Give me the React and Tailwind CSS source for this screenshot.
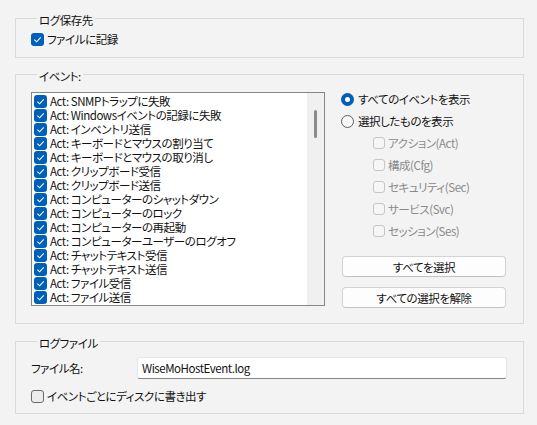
import React from "react";

const events = [
    "SNMPトラップに失敗",
    "Windowsイベントの記録に失敗",
    "インベントリ送信",
    "キーボードとマウスの割り当て",
    "キーボードとマウスの取り消し",
    "クリップボード受信",
    "クリップボード送信",
    "コンピューターのシャットダウン",
    "コンピューターのロック",
    "コンピューターの再起動",
    "コンピューターユーザーのログオフ",
    "チャットテキスト受信",
    "チャットテキスト送信",
    "ファイル受信",
    "ファイル送信",
    "ファイル転送の開始",
];

const categories = [
    ["アクション", "(Act)"],
    ["構成", "(Cfg)"],
    ["セキュリティ", "(Sec)"],
    ["サービス", "(Svc)"],
    ["セッション", "(Ses)"],
];

const Check = () => (
    <svg width="9" height="9" viewBox="0 0 10 10">
        <polyline points="1.5,5.2 4,7.6 8.6,2.6" fill="none" stroke="white" strokeWidth="1.2" />
    </svg>
);

const CheckedBox = () => (
    <span className="w-[13px] h-[13px] shrink-0 rounded-[3px] bg-[#005fb8] flex items-center justify-center">
        <Check />
    </span>
);

// group box with the caption sitting on the top border
const Group = ({ title, className, children }) => (
    <div className={"border border-[#dadada] " + className}>
        <div className="w-fit -mt-[6px] ml-[6px] px-[2px] bg-[#f3f3f3] leading-[14px] h-[14px]">{title}</div>
        {children}
    </div>
);

const App = () => {
    return (
        <div className="w-[537px] h-[425px] bg-[#f3f3f3] pl-[15px] pr-[13px] pt-[18px] text-[11.5px] tracking-[-0.45px] text-[#111] font-['Noto_Sans_CJK_JP',sans-serif] [font-feature-settings:'palt'] overflow-hidden">
            <Group title="ログ保存先" className="pl-[15px] pb-[11px]">
                <label className="mt-[5px] h-[14px] flex items-center gap-[3px] leading-[14px]">
                    <CheckedBox />
                    <span>ファイルに記録</span>
                </label>
            </Group>

            <Group title="イベント:" className="mt-[16px] pl-[15px] pb-[15px]">
                <div className="mt-[9px] flex gap-[16px]">
                    {/* list box */}
                    <div className="w-[294px] h-[214px] border border-[#868686] bg-white flex overflow-hidden">
                        <div className="flex-1 pt-[1px] pl-[2px] overflow-hidden">
                            {events.map((e) => (
                                <div key={e} className="h-[14px] flex items-center gap-[3px] leading-[14px] whitespace-nowrap">
                                    <CheckedBox />
                                    <span>Act: {e}</span>
                                </div>
                            ))}
                        </div>
                        <div className="w-[17px] bg-[#f0f0f0] pt-[17px]">
                            <div className="w-[3px] h-[28px] mx-auto rounded-full bg-[#8a8a8a]" />
                        </div>
                    </div>

                    {/* filter options */}
                    <div className="w-[166px] flex flex-col">
                        <div className="flex flex-col gap-[8px]">
                            <label className="h-[14px] flex items-center gap-[4px] leading-[14px]">
                                <span className="w-[13px] h-[13px] rounded-full bg-[#005fb8] flex items-center justify-center">
                                    <span className="w-[5px] h-[5px] rounded-full bg-white" />
                                </span>
                                <span>すべてのイベントを表示</span>
                            </label>
                            <label className="h-[14px] flex items-center gap-[4px] leading-[14px]">
                                <span className="w-[13px] h-[13px] rounded-full border border-[#5f5f5f] bg-[#f7f7f7]" />
                                <span>選択したものを表示</span>
                            </label>
                            {categories.map(([name, code]) => (
                                <label key={code} className="pl-[32px] h-[14px] flex items-center gap-[3px] leading-[14px] text-[#8a8a8a]">
                                    <span className="w-[12px] h-[12px] rounded-[3px] border border-[#c6c6c6] bg-[#f6f6f6]" />
                                    <span>
                                        {name}
                                        {code}
                                    </span>
                                </label>
                            ))}
                        </div>
                        <button className="mt-[18px] ml-[1px] w-[164px] h-[21px] rounded-[4px] bg-[#fdfdfd] border border-[#d3d3d3] border-b-[#c2c2c2] leading-[14px]">
                            すべてを選択
                        </button>
                        <button className="mt-[10px] ml-[1px] w-[164px] h-[21px] rounded-[4px] bg-[#fdfdfd] border border-[#d3d3d3] border-b-[#c2c2c2] leading-[14px]">
                            すべての選択を解除
                        </button>
                    </div>
                </div>
            </Group>

            <Group title="ログファイル" className="mt-[17px] pl-[15px] pb-[10px]">
                <div className="mt-[7px] flex items-center">
                    <span className="w-[106px] leading-[14px]">ファイル名:</span>
                    <div className="w-[370px] h-[22px] bg-white border border-[#e6e6e6] border-b-[#868686] rounded-[3px] pl-[4px] flex items-center leading-[14px]">
                        WiseMoHostEvent.log
                    </div>
                </div>
                <label className="mt-[10px] h-[14px] flex items-center gap-[3px] leading-[14px]">
                    <span className="w-[13px] h-[13px] rounded-[3px] border border-[#6b6b6b] bg-[#ececec]" />
                    <span>イベントごとにディスクに書き出す</span>
                </label>
            </Group>
        </div>
    );
};

export default App;
